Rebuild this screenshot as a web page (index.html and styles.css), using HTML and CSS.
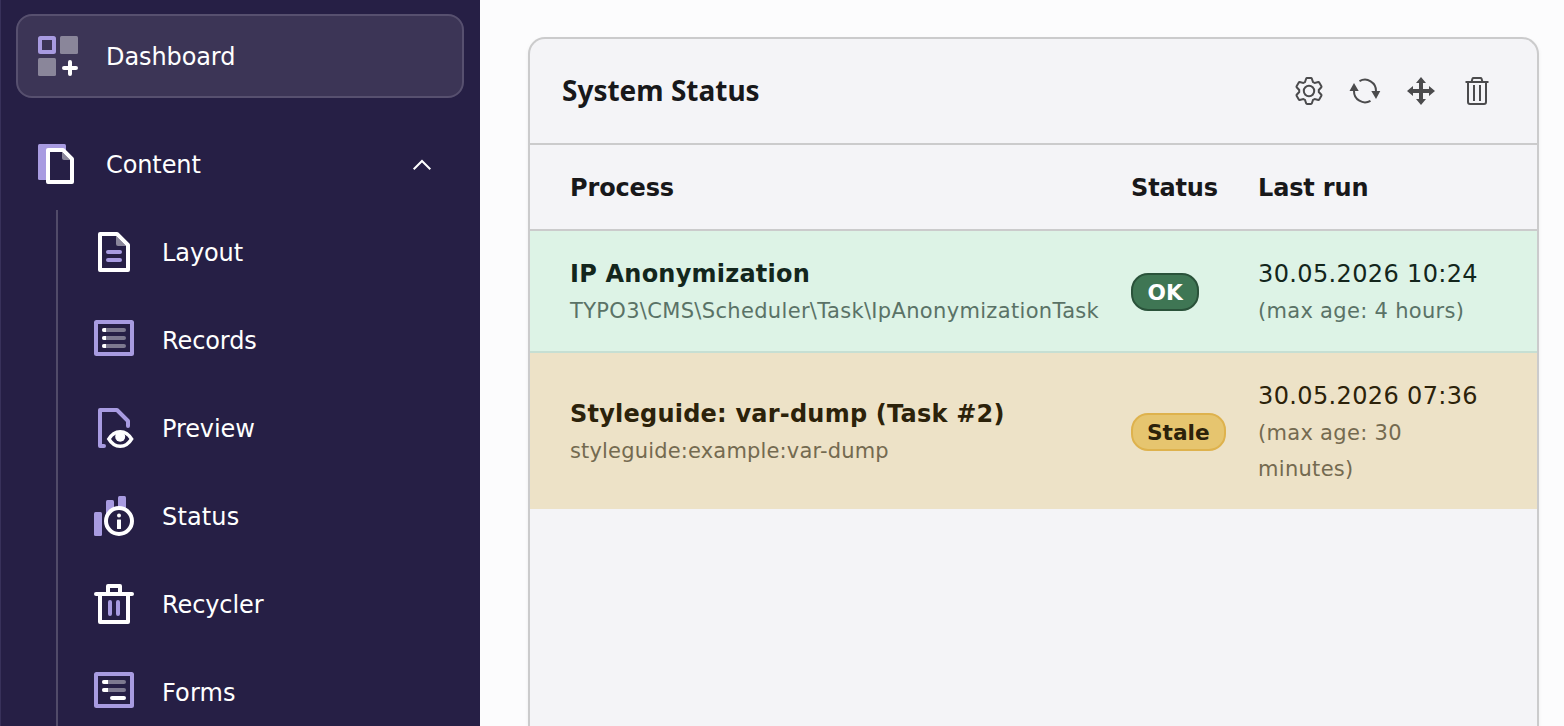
FILE: index.html
```html
<!DOCTYPE html>
<html lang="en">
<head>
    <meta charset="utf-8">
    <title>Dashboard</title>
    <link rel="stylesheet" href="styles.css">
</head>
<body>

<nav class="sidebar">
    <a class="menu-item active">
        <svg class="icon" viewBox="0 0 40 40">
            <rect class="line accent" x="2" y="2" width="14" height="14" rx=".5"/>
            <rect class="muted" x="22" width="18" height="18" rx="1.5"/>
            <rect class="muted" y="22" width="18" height="18" rx="1.5"/>
            <path class="line round" d="M26 32h12M32 26v12"/>
        </svg>
        <span class="name">Dashboard</span>
    </a>
    <a class="menu-item">
        <svg class="icon" viewBox="0 0 40 40">
            <rect class="accent-fill" width="28" height="36" rx="1.5"/>
            <path class="paper" d="M10 6h15l9 9v23H10z"/>
            <path class="muted" d="M24 8l8 8h-6q-2 0-2-2z"/>
            <path class="line" d="M10 6h15l9 9v23H10z"/>
        </svg>
        <span class="name">Content</span>
        <svg class="chevron" viewBox="0 0 20 12"><path d="M1.7 10.3L10 2l8.3 8.3"/></svg>
    </a>
    <div class="submenu">
        <a class="menu-item">
            <svg class="icon" viewBox="0 0 40 40">
                <path class="muted" d="M22 4l10 10h-8q-2 0-2-2z"/>
                <path class="line" d="M6 2h17l11 11v25H6z"/>
                <path class="line accent round" d="M14 20h12M14 28h12"/>
            </svg>
            <span class="name">Layout</span>
        </a>
        <a class="menu-item">
            <svg class="icon" viewBox="0 0 40 40">
                <rect class="line accent" x="2" y="2" width="36" height="32" rx=".5"/>
                <path class="line round muted-line" d="M10 10h20M10 18h20M10 26h20"/>
                <path class="white" d="M12 8h-2a2 2 0 0 0 0 4h2zM12 16h-2a2 2 0 0 0 0 4h2zM12 24h-2a2 2 0 0 0 0 4h2z"/>
            </svg>
            <span class="name">Records</span>
        </a>
        <a class="menu-item">
            <svg class="icon" viewBox="0 0 40 40">
                <path class="line accent round" d="M10 38H6V2h17l11 11v5"/>
                <path class="white" fill-rule="evenodd" d="M12.7 31q5.3-9 13.5-9t13.5 9q-5.3 9-13.5 9t-13.5-9zM17 31q3.5 5.5 9.2 5.5t9.2-5.5q-3.5-5.5-9.2-5.5T17 31z"/>
                <circle class="white" cx="26.2" cy="28.8" r="5"/>
            </svg>
            <span class="name">Preview</span>
        </a>
        <a class="menu-item">
            <svg class="icon" viewBox="0 0 40 40">
                <rect class="accent-fill" y="16" width="8" height="24" rx="1.5"/>
                <rect class="accent-fill" x="12" y="4" width="8" height="20" rx="1.5"/>
                <rect class="accent-fill" x="24" width="8" height="20" rx="1.5"/>
                <circle class="line paper" cx="25" cy="25" r="13"/>
                <circle class="white" cx="25" cy="19.5" r="2"/>
                <rect class="white" x="23" y="23.5" width="4" height="9.5" rx=".5"/>
            </svg>
            <span class="name status">Status</span>
        </a>
        <a class="menu-item">
            <svg class="icon" viewBox="0 0 40 40">
                <path class="line round" d="M2 10h36M14 10V2h12v8M6 10v28h28V10"/>
                <path class="line accent round" d="M16 18v12M24 18v12"/>
            </svg>
            <span class="name">Recycler</span>
        </a>
        <a class="menu-item">
            <svg class="icon" viewBox="0 0 40 40">
                <rect class="line accent" x="2" y="2" width="36" height="32" rx=".5"/>
                <path class="line round muted-line" d="M10 10h20M10 18h20"/>
                <path class="white" d="M14 8h-4a2 2 0 0 0 0 4h4zM14 16h-4a2 2 0 0 0 0 4h4z"/>
                <path class="line round" d="M18 26h12"/>
            </svg>
            <span class="name status">Forms</span>
        </a>
    </div>
</nav>

<main class="main">
    <section class="widget">
        <header class="widget-header">
            <h2>System Status</h2>
            <div class="actions">
                <svg viewBox="0 0 32 32">
                    <path class="stroke" d="M12 7L13.2 3.5Q13.4 3 14 3h4q.6 0 .8.5L20 7l1.800 1 3.500-.9q.6-.1.900.4l2.200 3.800q.3.500-.1 1L25.800 15v2l2.500 2.700q.4.500.1 1l-2.200 3.800q-.3.500-.9.400L21.800 24 20 25l-1.200 3.500q-.2.500-.8.500h-4q-.6 0-.8-.5L12 25l-1.800-1-3.500.9q-.6.100-.9-.4l-2.200-3.800q-.3-.5.100-1L6.200 17v-2l-2.500-2.700q-.4-.5-.1-1l2.200-3.800q.3-.5.900-.4l3.500.9z"/>
                    <circle class="stroke" cx="16" cy="16" r="5.2"/>
                </svg>
                <svg viewBox="0 0 32 32">
                    <path class="stroke" d="M10.5 6.200A11 11 0 0 1 27 16M21.5 25.800A11 11 0 0 1 5 16"/>
                    <path d="M.5 16L5 8l4.700 8zM22.300 16h9L27 24z"/>
                </svg>
                <svg viewBox="0 0 32 32">
                    <path d="M16 2l5 6h-3v6h6v-3l6 5-6 5v-3h-6v6h3l-5 6-5-6h3v-6H8v3l-6-5 6-5v3h6V8h-3z"/>
                </svg>
                <svg viewBox="0 0 32 32">
                    <path class="stroke" d="M4.500 7h23M10.500 7l1-3.500q.2-.5 1-.5h7q.8 0 1 .5l1 3.500M7 7v20q0 2 2 2h14q2 0 2-2V7M13 10v16M19 10v16"/>
                </svg>
            </div>
        </header>
        <table class="status-table">
            <thead>
                <tr>
                    <th class="col-process">Process</th>
                    <th class="col-status">Status</th>
                    <th>Last run</th>
                </tr>
            </thead>
            <tbody>
                <tr class="success">
                    <td><strong>IP Anonymization</strong><br><small class="task">TYPO3\CMS\Scheduler\Task\IpAnonymizationTask</small></td>
                    <td><span class="badge badge-success">OK</span></td>
                    <td><span class="date">30.05.2026 10:24</span><br><small class="age">(max age: 4 hours)</small></td>
                </tr>
                <tr class="warning">
                    <td><strong>Styleguide: var-dump (Task #2)</strong><br><small>styleguide:example:var-dump</small></td>
                    <td><span class="badge badge-warning">Stale</span></td>
                    <td><span class="date">30.05.2026 07:36</span><br><small class="age">(max age: 30 minutes)</small></td>
                </tr>
            </tbody>
        </table>
    </section>
</main>

</body>
</html>
```
FILE: styles.css
```css
* {
    box-sizing: border-box;
}

body {
    margin: 0;
    height: 726px;
    display: flex;
    overflow: hidden;
    background-color: #fcfcfd;
    font-family: Verdana, "DejaVu Sans", sans-serif;
    font-size: 24px;
    line-height: 36px;
}

/* sidebar */
.sidebar {
    width: 480px;
    height: 726px;
    padding: 14px 16px 0 15px;
    flex-shrink: 0;
    overflow: hidden;
    background-color: #261f45;
    border-left: 1px solid #38315a;
    color: #fff;
}

.menu-item {
    display: flex;
    align-items: center;
    height: 84px;
    padding: 0 22px;
    gap: 28px;
}

.menu-item.active {
    padding: 0 20px;
    margin-bottom: 24px;
    background-color: #3c3556;
    border: 2px solid #57506f;
    border-radius: 16px;
}

.name {
    flex: 1;
    padding-top: 2px;
    letter-spacing: -0.1px;
}

.name.status {
    letter-spacing: 0.15px;
}

.submenu {
    display: flex;
    flex-direction: column;
    gap: 4px;
    margin: 4px 0 0 40px;
    padding-left: 14px;
    border-left: 2px solid #514b69;
}

.icon {
    width: 40px;
    height: 40px;
    flex-shrink: 0;
}

.chevron {
    width: 20px;
    height: 12px;
    margin: 2px 10px 0 0;
    fill: none;
    stroke: #fff;
    stroke-width: 2;
}

.line {
    fill: none;
    stroke: #fff;
    stroke-width: 4;
    stroke-linejoin: round;
}

.round {
    stroke-linecap: round;
}

.accent {
    stroke: #a89be1;
}

.accent-fill {
    fill: #a89be1;
}

.muted {
    fill: #8a869a;
}

.muted-line {
    stroke: #7d798f;
}

.white {
    fill: #fff;
}

.paper {
    fill: #261f45;
}

/* widget */
.main {
    flex: 1;
    padding: 37px 25px 0 48px;
}

.widget {
    height: 689px;
    background-color: #f4f4f7;
    border: 2px solid #cbcbcc;
    border-bottom: none;
    border-radius: 17px 17px 0 0;
    box-shadow: 0 2px 4px rgba(0, 0, 0, 0.06);
    color: #18181a;
}

.widget-header {
    display: flex;
    align-items: center;
    justify-content: space-between;
    height: 106px;
    padding: 0 44px 0 32px;
    border-bottom: 2px solid #cbcbcc;
}

.widget-header h2 {
    margin: 0;
    padding-bottom: 2px;
    font-family: "Noto Sans", sans-serif;
    font-size: 28px;
    font-weight: 700;
}

.actions {
    display: flex;
    gap: 24px;
}

.actions svg {
    width: 32px;
    height: 32px;
    fill: #4b4b4d;
}

.actions .stroke {
    fill: none;
    stroke: #4b4b4d;
    stroke-width: 2;
}

.status-table {
    width: 100%;
    table-layout: fixed;
    border-collapse: separate;
    border-spacing: 0;
}

th,
td {
    padding: 25px 16px 23px;
    text-align: left;
    vertical-align: middle;
}

th {
    border-bottom: 2px solid #cbcbcc;
    letter-spacing: -0.15px;
}

th:first-child,
td:first-child {
    padding-left: 40px;
}

th:last-child,
td:last-child {
    padding-right: 40px;
}

.col-process {
    width: 585px;
}

.col-status {
    width: 127px;
}

strong {
    letter-spacing: 0.22px;
}

small {
    font-size: 21px;
    line-height: 24px;
    letter-spacing: 0.17px;
}

.task {
    letter-spacing: 0.33px;
}

.age {
    letter-spacing: 0.3px;
}

.date {
    letter-spacing: 0.36px;
}

.success {
    background-color: #ddf3e6;
    color: #13261c;
}

.success td {
    border-bottom: 2px solid #c6dfd3;
}

.success small {
    color: #5a7266;
}

.warning {
    background-color: #ede2c7;
    color: #2c220a;
}

.warning small {
    color: #746a50;
}

.badge {
    display: block;
    width: max-content;
    height: 38px;
    padding: 0 14px;
    border: 2px solid;
    border-radius: 17px;
    font-size: 21.7px;
    font-weight: 700;
    line-height: 35px;
}

.badge-success {
    padding: 0 14.5px;
    background-color: #3f7654;
    border-color: #2a523a;
    color: #fff;
}

.badge-warning {
    background-color: #e6c56f;
    border-color: #deb24d;
}
```
